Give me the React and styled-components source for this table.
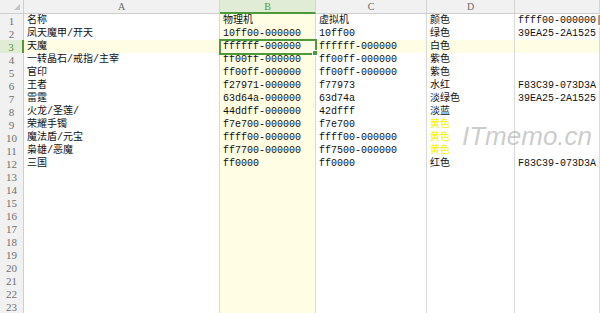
import styled, { createGlobalStyle } from "styled-components";

const GlobalStyle = createGlobalStyle`
  html, body {
    margin: 0;
    padding: 0;
    background: #ffffff;
    overflow: hidden;
  }
`;

const COLS = "24px 196px 96px 111px 88px 1fr";
const GRID = "#dadada";
const GREEN = "#4c9a3a";
const SEL_BG = "#fffde3";

const Sheet = styled.div`
  position: relative;
  width: 600px;
  height: 313px;
  overflow: hidden;
  font-family: "Liberation Mono", "Noto Sans CJK SC", monospace;
  font-size: 10px;
  color: #111111;
`;

const HeaderRow = styled.div`
  display: grid;
  grid-template-columns: ${COLS};
  height: 14px;
`;

const Corner = styled.div`
  position: relative;
  box-sizing: border-box;
  background: #f1f1f1;
  border-right: 1px solid #cfcfcf;
  border-bottom: 1px solid #cfcfcf;
  &::after {
    content: "";
    position: absolute;
    right: 3px;
    bottom: 3px;
    width: 0;
    height: 0;
    border-left: 6px solid transparent;
    border-bottom: 6px solid #c4c4c4;
  }
`;

const ColHead = styled.div`
  box-sizing: border-box;
  display: flex;
  align-items: center;
  justify-content: center;
  background: ${(p) => (p.$active ? "#e1ecd6" : "#f1f1f1")};
  color: ${(p) => (p.$active ? GREEN : "#6a6a6a")};
  border-right: 1px solid #d4d4d4;
  border-bottom: ${(p) => (p.$active ? `2px solid ${GREEN}` : "1px solid #cfcfcf")};
  font-family: "Liberation Serif", serif;
  font-size: 10px;
`;

const Row = styled.div`
  display: grid;
  grid-template-columns: ${COLS};
  height: 13px;
`;

const RowHead = styled.div`
  box-sizing: border-box;
  display: flex;
  align-items: center;
  justify-content: center;
  padding-top: 1px;
  background: ${(p) => (p.$active ? "#e1ecd6" : "#f1f1f1")};
  color: ${(p) => (p.$active ? GREEN : "#707070")};
  border-bottom: 1px solid #d6d6d6;
  border-right: ${(p) => (p.$active ? `2px solid ${GREEN}` : "1px solid #cfcfcf")};
  font-family: "Liberation Serif", serif;
  font-size: 11px;
`;

const Cell = styled.div`
  position: relative;
  box-sizing: border-box;
  padding: 1px 0 0 3px;
  line-height: 12px;
  white-space: nowrap;
  overflow: visible;
  background: ${(p) => (p.$hl ? SEL_BG : "#ffffff")};
  color: ${(p) => p.$color || "#111111"};
  border-right: 1px solid ${GRID};
  border-bottom: 1px solid ${GRID};
  outline: ${(p) => (p.$selected ? `2px solid ${GREEN}` : "none")};
  outline-offset: -1px;
  z-index: ${(p) => (p.$selected ? 2 : 1)};
  &::after {
    content: "";
    display: ${(p) => (p.$selected ? "block" : "none")};
    position: absolute;
    right: -3px;
    bottom: -3px;
    width: 4px;
    height: 4px;
    background: ${GREEN};
    border: 1px solid #ffffff;
  }
`;

const Watermark = styled.div`
  position: absolute;
  left: 462px;
  top: 121px;
  font-family: "Liberation Sans", Arial, sans-serif;
  font-style: italic;
  font-size: 26px;
  color: rgba(160, 160, 160, 0.55);
  z-index: 5;
  pointer-events: none;
`;

const YELLOW = "#f2f200";

const data = [
  ["名称", "物理机", "虚拟机", "颜色", "ffff00-000000|1"],
  ["凤天魔甲/开天", "10ff00-000000", "10ff00", "绿色", "39EA25-2A1525"],
  ["天魔", "ffffff-000000", "ffffff-000000", "白色", ""],
  ["一转晶石/戒指/主宰", "ff00ff-000000", "ff00ff-000000", "紫色", ""],
  ["官印", "ff00ff-000000", "ff00ff-000000", "紫色", ""],
  ["王者", "f27971-000000", "f77973", "水红", "F83C39-073D3A"],
  ["雷霆", "63d64a-000000", "63d74a", "淡绿色", "39EA25-2A1525"],
  ["火龙/圣莲/", "44ddff-000000", "42dfff", "淡蓝", ""],
  ["荣耀手镯", "f7e700-000000", "f7e700", "黄色", "", YELLOW],
  ["魔法盾/元宝", "ffff00-000000", "ffff00-000000", "黄色", "", YELLOW],
  ["枭雄/恶魔", "ff7700-000000", "ff7500-000000", "黄色", "", YELLOW],
  ["三国", "ff0000", "ff0000", "红色", "F83C39-073D3A"],
];

const TOTAL_ROWS = 23;
const ACTIVE_ROW = 3;

export default function App() {
  const rows = [];
  for (let i = 0; i < TOTAL_ROWS; i++) {
    const r = data[i] || ["", "", "", "", ""];
    const n = i + 1;
    const active = n === ACTIVE_ROW;
    rows.push(
      <Row key={n}>
        <RowHead $active={active}>{n}</RowHead>
        <Cell $hl={active}>{r[0]}</Cell>
        <Cell $hl $selected={active}>{r[1]}</Cell>
        <Cell $hl={active}>{r[2]}</Cell>
        <Cell $hl={active} $color={r[5]}>{r[3]}</Cell>
        <Cell $hl={active}>{r[4]}</Cell>
      </Row>
    );
  }

  return (
    <>
      <GlobalStyle />
      <Sheet>
        <HeaderRow>
          <Corner />
          <ColHead>A</ColHead>
          <ColHead $active>B</ColHead>
          <ColHead>C</ColHead>
          <ColHead>D</ColHead>
          <ColHead />
        </HeaderRow>
        {rows}
        <Watermark>ITmemo.cn</Watermark>
      </Sheet>
    </>
  );
}
